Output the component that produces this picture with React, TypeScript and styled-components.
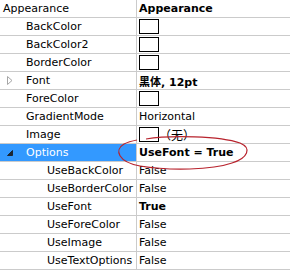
import React from "react";
import styled, { createGlobalStyle } from "styled-components";

const GlobalStyle = createGlobalStyle`
  html, body {
    margin: 0;
    padding: 0;
    background: #ffffff;
  }
`;

const Grid = styled.div`
  position: relative;
  width: 290px;
  height: 270px;
  overflow: hidden;
  background: #ffffff;
  font-family: "DejaVu Sans", "Noto Sans CJK SC", sans-serif;
  font-size: 11px;
  color: #000000;
`;

const Row = styled.div`
  display: flex;
  height: 17px;
  border-bottom: 1px solid #cbcbcb;
`;

const NameCell = styled.div<{ indent: number; selected?: boolean }>`
  width: 137px;
  flex: none;
  display: flex;
  align-items: center;
  box-sizing: border-box;
  padding-left: ${({ indent }) => indent}px;
  border-right: 1px solid #cbcbcb;
  white-space: nowrap;
  overflow: hidden;
  background-color: ${({ selected }) => (selected ? "#3399ff" : "transparent")};
  color: ${({ selected }) => (selected ? "#ffffff" : "#000000")};
`;

const Expander = styled.span`
  width: 19px;
  flex: none;
  display: flex;
  align-items: center;
`;

const ValueCell = styled.div<{ bold?: boolean }>`
  flex: 1;
  display: flex;
  align-items: center;
  padding-left: 2px;
  white-space: nowrap;
  font-weight: ${({ bold }) => (bold ? "bold" : "normal")};
`;

const Swatch = styled.span`
  width: 18px;
  height: 13px;
  flex: none;
  border: 1px solid #000000;
  background: #ffffff;
`;

const Note = styled.span`
  margin-left: 0px;
  font-family: "Noto Sans CJK SC", sans-serif;
  font-size: 12px;
  line-height: 14px;
`;

const Annotation = styled.svg`
  position: absolute;
  left: 0;
  top: 0;
  pointer-events: none;
`;

type Prop = {
  name: string;
  level: number;
  value?: string;
  bold?: boolean;
  swatch?: boolean;
  expander?: "closed" | "open";
  selected?: boolean;
};

const props: Prop[] = [
  { name: "Appearance", level: 0, value: "Appearance", bold: true },
  { name: "BackColor", level: 1, swatch: true },
  { name: "BackColor2", level: 1, swatch: true },
  { name: "BorderColor", level: 1, swatch: true },
  { name: "Font", level: 1, value: "黑体, 12pt", bold: true, expander: "closed" },
  { name: "ForeColor", level: 1, swatch: true },
  { name: "GradientMode", level: 1, value: "Horizontal" },
  { name: "Image", level: 1, swatch: true, value: "（无）" },
  { name: "Options", level: 1, value: "UseFont = True", bold: true, expander: "open", selected: true },
  { name: "UseBackColor", level: 2, value: "False" },
  { name: "UseBorderColor", level: 2, value: "False" },
  { name: "UseFont", level: 2, value: "True", bold: true },
  { name: "UseForeColor", level: 2, value: "False" },
  { name: "UseImage", level: 2, value: "False" },
  { name: "UseTextOptions", level: 2, value: "False" },
];

const ClosedArrow = () => (
  <svg width="6" height="9" viewBox="0 0 6 9">
    <path d="M0.5 0.5 L5 4.5 L0.5 8.5 Z" fill="#ffffff" stroke="#a6a6a6" />
  </svg>
);

const OpenArrow = () => (
  <svg width="6" height="6" viewBox="0 0 6 6">
    <path d="M5.5 0.5 L5.5 5.5 L0.5 5.5 Z" fill="#1c2733" stroke="#1c2733" />
  </svg>
);

const indentFor = (p: Prop) => {
  if (p.level === 0) return 3;
  if (p.level === 1) return p.expander ? 7 : 26;
  return 47;
};

const App = (): JSX.Element => {
  return (
    <>
      <GlobalStyle />
      <Grid>
        {props.map((p) => (
          <Row key={p.name}>
            <NameCell indent={indentFor(p)} selected={p.selected}>
              {p.expander && (
                <Expander>{p.expander === "open" ? <OpenArrow /> : <ClosedArrow />}</Expander>
              )}
              {p.name}
            </NameCell>
            <ValueCell bold={p.bold}>
              {p.swatch && <Swatch />}
              {p.swatch && p.value ? <Note>{p.value}</Note> : p.value}
            </ValueCell>
          </Row>
        ))}
        <Annotation width="290" height="270" viewBox="0 0 290 270">
          <path
            d="M146 139 C 170 135, 220 136, 240 143 C 252 148, 248 158, 232 163 C 212 170, 170 171, 140 166 C 118 162, 114 150, 124 144 C 128 142, 132 141, 137 140"
            fill="none"
            stroke="#b8232d"
            strokeWidth="1.2"
          />
        </Annotation>
      </Grid>
    </>
  );
};

export default App;
